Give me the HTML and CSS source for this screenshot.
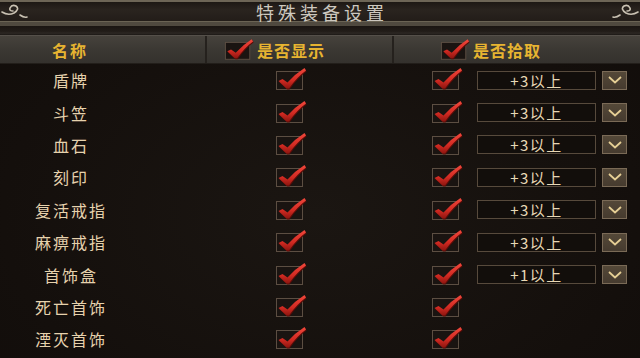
FILE: index.html
```
<!DOCTYPE html>
<html lang="zh">
<head>
<meta charset="utf-8">
<link rel="stylesheet" href="styles.css">
</head>
<body>
<svg width="0" height="0" class="defs">
  <defs>
    <linearGradient id="red" x1="0" y1="0" x2="0" y2="1">
      <stop offset="0" stop-color="#f0483c"/>
      <stop offset="0.6" stop-color="#d22a22"/>
      <stop offset="1" stop-color="#8e1610"/>
    </linearGradient>
    <symbol id="chk" viewBox="0 0 32 26">
      <rect x="1.5" y="6.5" width="26" height="18" fill="#1a1411" stroke="#5c4e42" stroke-width="1"/>
      <path d="M3.5 16 L7.5 14 L12.5 17.5 Q20 9 29.5 3 L31 5.5 Q22 12 14 23.5 L11.5 23.5 Z" fill="#5a0c08" transform="translate(0.6,1)"/>
      <path d="M3.5 16 L7.5 14 L12.5 17.5 Q20 9 29.5 3 L31 5.5 Q22 12 14 23.5 L11.5 23.5 Z" fill="url(#red)"/>
    </symbol>
  </defs>
</svg>
<div class="panel">
  <div class="titlebar">
    <svg class="orn orn-l" width="28" height="18" viewBox="0 0 28 18"><path d="M2 9 Q8 13 14 10 Q20 6 16 3 Q12 1 10 5 Q9 8 13 8 M20 12 Q24 15 27 14" fill="none" stroke="#c9c1b2" stroke-width="1.6" stroke-linecap="round"/></svg>
    <span class="title">特殊装备设置</span>
    <svg class="orn orn-r" width="28" height="18" viewBox="0 0 28 18"><path d="M26 9 Q20 13 14 10 Q8 6 12 3 Q16 1 18 5 Q19 8 15 8 M8 12 Q4 15 1 14" fill="none" stroke="#c9c1b2" stroke-width="1.6" stroke-linecap="round"/></svg>
  </div>
  <div class="band"></div>
  <div class="head">
    <div class="hcell hname">名称</div>
    <div class="hcell hshow"><svg class="hchk" width="30" height="25"><use href="#chk"/></svg><span>是否显示</span></div>
    <div class="hcell hpick"><svg class="hchk" width="30" height="25"><use href="#chk"/></svg><span>是否拾取</span></div>
  </div>
  <div class="rows">
    <div class="row"><span class="name">盾牌</span><svg class="chk c1" width="32" height="26"><use href="#chk"/></svg><svg class="chk c2" width="32" height="26"><use href="#chk"/></svg><div class="sel">+3以上</div><div class="btn"><svg width="14" height="8" viewBox="0 0 14 8"><path d="M1 1 L7 6.5 L13 1" fill="none" stroke="#e6cf95" stroke-width="1.8"/></svg></div></div>
    <div class="row"><span class="name">斗笠</span><svg class="chk c1" width="32" height="26"><use href="#chk"/></svg><svg class="chk c2" width="32" height="26"><use href="#chk"/></svg><div class="sel">+3以上</div><div class="btn"><svg width="14" height="8" viewBox="0 0 14 8"><path d="M1 1 L7 6.5 L13 1" fill="none" stroke="#e6cf95" stroke-width="1.8"/></svg></div></div>
    <div class="row"><span class="name">血石</span><svg class="chk c1" width="32" height="26"><use href="#chk"/></svg><svg class="chk c2" width="32" height="26"><use href="#chk"/></svg><div class="sel">+3以上</div><div class="btn"><svg width="14" height="8" viewBox="0 0 14 8"><path d="M1 1 L7 6.5 L13 1" fill="none" stroke="#e6cf95" stroke-width="1.8"/></svg></div></div>
    <div class="row"><span class="name">刻印</span><svg class="chk c1" width="32" height="26"><use href="#chk"/></svg><svg class="chk c2" width="32" height="26"><use href="#chk"/></svg><div class="sel">+3以上</div><div class="btn"><svg width="14" height="8" viewBox="0 0 14 8"><path d="M1 1 L7 6.5 L13 1" fill="none" stroke="#e6cf95" stroke-width="1.8"/></svg></div></div>
    <div class="row"><span class="name">复活戒指</span><svg class="chk c1" width="32" height="26"><use href="#chk"/></svg><svg class="chk c2" width="32" height="26"><use href="#chk"/></svg><div class="sel">+3以上</div><div class="btn"><svg width="14" height="8" viewBox="0 0 14 8"><path d="M1 1 L7 6.5 L13 1" fill="none" stroke="#e6cf95" stroke-width="1.8"/></svg></div></div>
    <div class="row"><span class="name">麻痹戒指</span><svg class="chk c1" width="32" height="26"><use href="#chk"/></svg><svg class="chk c2" width="32" height="26"><use href="#chk"/></svg><div class="sel">+3以上</div><div class="btn"><svg width="14" height="8" viewBox="0 0 14 8"><path d="M1 1 L7 6.5 L13 1" fill="none" stroke="#e6cf95" stroke-width="1.8"/></svg></div></div>
    <div class="row"><span class="name">首饰盒</span><svg class="chk c1" width="32" height="26"><use href="#chk"/></svg><svg class="chk c2" width="32" height="26"><use href="#chk"/></svg><div class="sel">+1以上</div><div class="btn"><svg width="14" height="8" viewBox="0 0 14 8"><path d="M1 1 L7 6.5 L13 1" fill="none" stroke="#e6cf95" stroke-width="1.8"/></svg></div></div>
    <div class="row"><span class="name">死亡首饰</span><svg class="chk c1" width="32" height="26"><use href="#chk"/></svg><svg class="chk c2" width="32" height="26"><use href="#chk"/></svg></div>
    <div class="row"><span class="name">湮灭首饰</span><svg class="chk c1" width="32" height="26"><use href="#chk"/></svg><svg class="chk c2" width="32" height="26"><use href="#chk"/></svg></div>
  </div>
</div>
</body>
</html>
```
FILE: styles.css
```
html, body {
  margin: 0;
  padding: 0;
  background: #15110e;
}
body {
  width: 640px;
  height: 358px;
  overflow: hidden;
  font-family: "Noto Sans CJK SC", "Noto Sans", sans-serif;
}
.defs {
  position: absolute;
  width: 0;
  height: 0;
}
.panel {
  width: 640px;
  height: 358px;
  background: radial-gradient(ellipse at 50% 60%, #1b1612 0%, #140f0c 70%, #110d0a 100%);
}
.titlebar {
  height: 20px;
  border-top: 2px solid #6d6556;
  border-bottom: 4px solid #4f493f;
  background: linear-gradient(180deg, #1d1814 0%, #2a241f 40%, #221c18 100%);
  display: flex;
  align-items: center;
  justify-content: center;
  position: relative;
  box-shadow: inset 0 -1px 0 #6a6354;
}
.title {
  color: #cdc8bf;
  font-size: 18px;
  letter-spacing: 4px;
  line-height: 20px;
  margin-left: 4px;
}
.orn {
  position: absolute;
  top: 1px;
}
.orn-l { left: 0; }
.orn-r { right: 0; }
.band {
  height: 9px;
  background: linear-gradient(180deg, #1a1512 0%, #221d19 60%, #2c2723 80%, #1b1714 100%);
}
.head {
  height: 27px;
  background: linear-gradient(180deg, #46423c 0%, #3b3833 50%, #34312d 100%);
  border-top: 1px solid #55504a;
  border-bottom: 1px solid #221e1a;
  display: flex;
  align-items: center;
}
.hcell {
  height: 100%;
  display: flex;
  align-items: center;
  color: #e7b431;
  font-size: 16px;
  font-weight: bold;
  letter-spacing: 1px;
}
.hname {
  width: 207px;
  padding-left: 52px;
  box-sizing: border-box;
  border-right: 2px solid #25211d;
  letter-spacing: 2px;
}
.hshow {
  width: 187px;
  padding-left: 17px;
  box-sizing: border-box;
  border-right: 2px solid #25211d;
}
.hpick {
  flex: 1;
  padding-left: 46px;
}
.hchk {
  margin-right: 3px;
  margin-top: -2px;
}
.rows {
  padding-top: 0;
}
.row {
  height: 32.4px;
  display: flex;
  align-items: center;
}
.name {
  width: 140px;
  text-align: center;
  color: #e6d2ad;
  font-size: 16px;
  letter-spacing: 2px;
  padding-left: 2px;
  box-sizing: border-box;
}
.chk {
  margin-top: -4px;
}
.c1 {
  margin-left: 135px;
}
.c2 {
  margin-left: 124px;
}
.sel {
  margin-left: 14px;
  width: 117px;
  height: 17px;
  border: 1px solid #574a3c;
  background: #120e0b;
  color: #e8d8b6;
  font-size: 15px;
  line-height: 17px;
  text-align: center;
  letter-spacing: 1.5px;
}
.btn {
  margin-left: 6px;
  width: 23px;
  height: 17px;
  border: 1px solid #7a6a56;
  background: linear-gradient(180deg, #544838 0%, #463b2f 100%);
  display: flex;
  align-items: center;
  justify-content: center;
}
```
